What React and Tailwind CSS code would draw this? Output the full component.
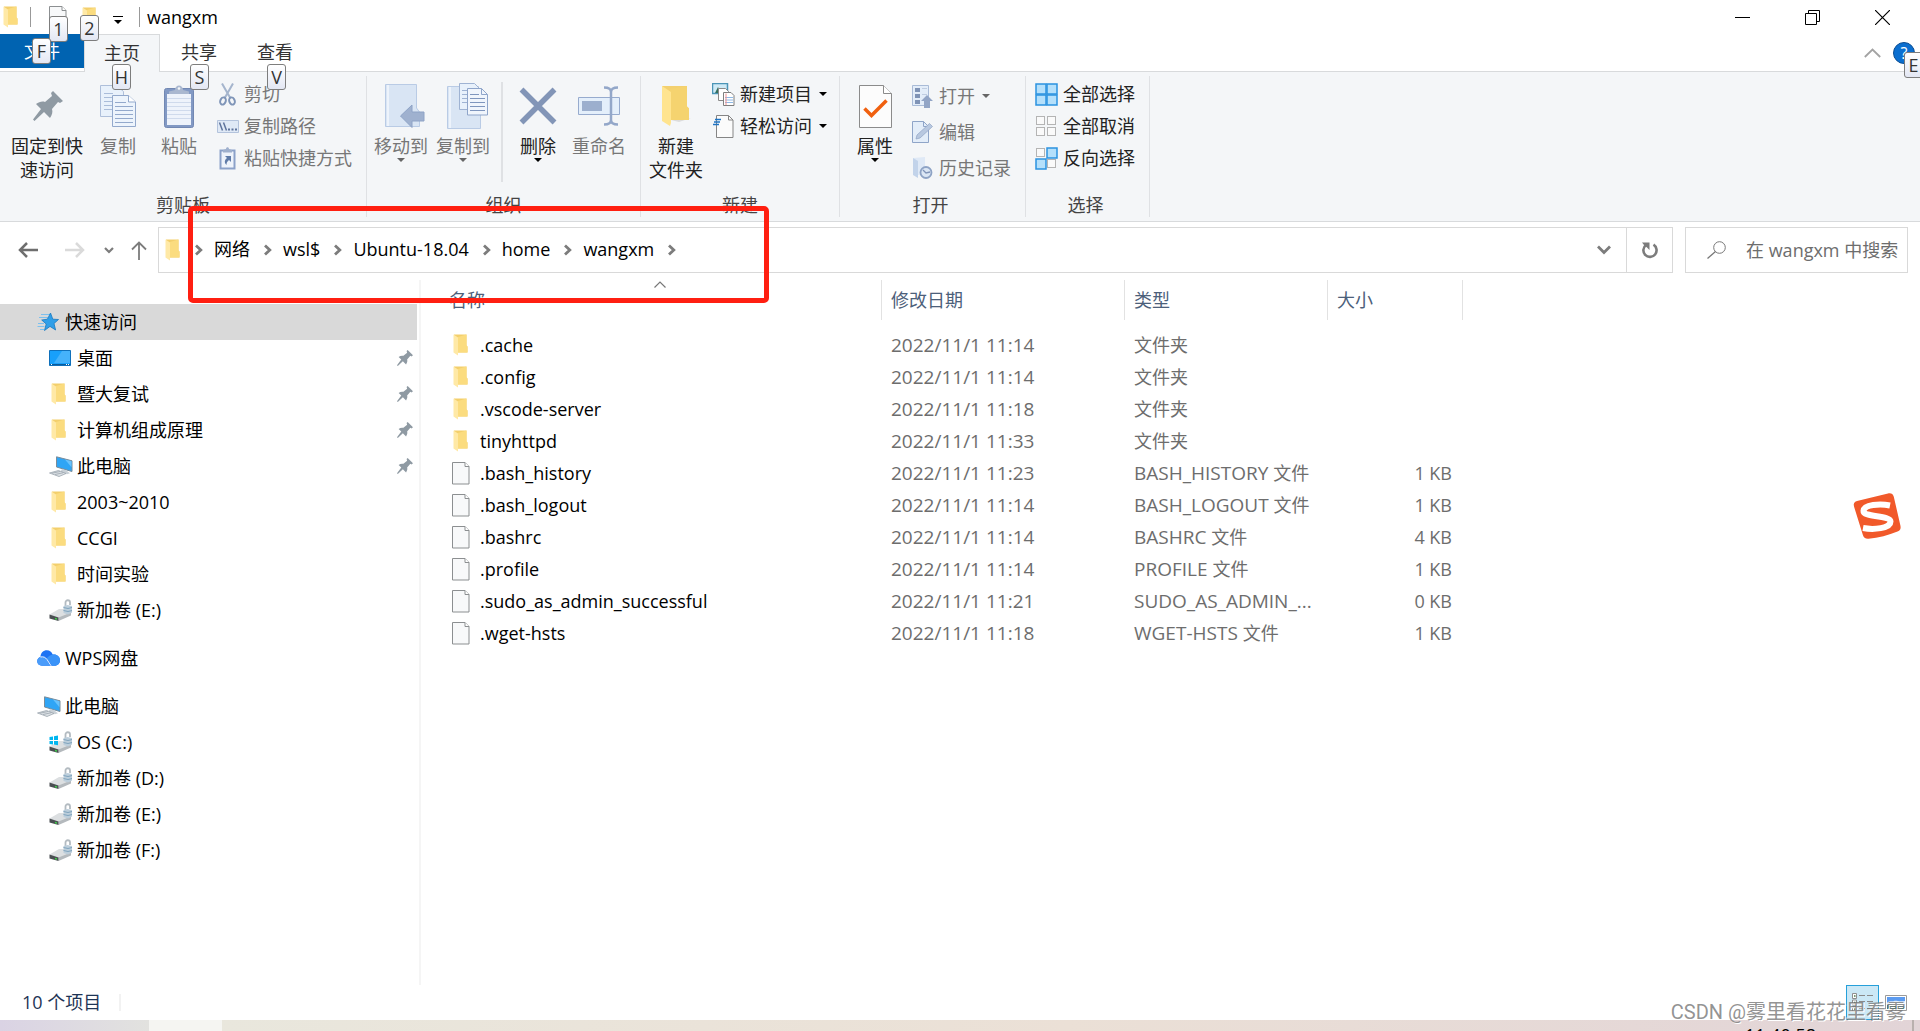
import React from 'react';

/* ---------- icons ---------- */

const Folder = ({ className = "w-[15px] h-[22px]" }) => (
    <svg viewBox="0 0 15 22" className={className} aria-hidden="true">
        <path d="M1 0.5h12.5v11l1 1v6H5L1 18z" fill="#f3cf6c" />
        <path d="M5 3l8.5-2.5v11l1 1v6H5z" fill="#fbdc7f" />
        <path d="M0.5 0.5L5 3.5v18L0.500 18.500z" fill="#ffe9a6" />
    </svg>
);

const Page = ({ className = "w-[18px] h-[23px]" }) => (
    <svg viewBox="0 0 18 23" className={className} aria-hidden="true">
        <path d="M0.500 0.500h12.500l4 4v17.500h-16.500z" fill="#f8f9fa" stroke="#8c8f91" />
        <path d="M13 0.500v4h4" fill="#fff" stroke="#8c8f91" />
    </svg>
);

const Pin = ({ className = "w-4 h-4" }) => (
    <svg viewBox="0 0 30 30" className={className} aria-hidden="true">
        <path d="M20 0l10 10-3 2-2-1-6 7c1 3 0 6-2 9l-6-6L1.500 30 0 28.500 8 18 3 13c3-2 6-3 9-2l7-6-1-3z" fill="#8f9aa3" />
    </svg>
);

const Star = () => (
    <svg viewBox="0 0 22 20" className="w-[22px] h-5" aria-hidden="true">
        <path d="M4 2.500h9M2 5.500h9M1 11.500h6M0.500 14.500h7M3 17.500h4" stroke="#7cc0ee" strokeWidth="1" />
        <path d="M13.500 1l2.300 6.200 5.700.3-4.500 4 1.600 6.500-5.600-3.600L7.500 18.500l1.700-6.500-4.500-4 5.700-.8z" fill="#2f9fe8" stroke="#1879c0" strokeWidth="0.8" />
    </svg>
);

const Desktop = () => (
    <svg viewBox="0 0 22 16" className="w-[22px] h-4" aria-hidden="true">
        <path d="M0.500 0.500h21v15h-21z" fill="#18a0fb" stroke="#0f70bb" />
        <path d="M13 1h8v12H5z" fill="#45b2fb" />
        <path d="M1 14.500h20" stroke="#0b5a99" />
        <path d="M2 14.500h1M17 14.500h1M19 14.500h1" stroke="#fff" />
    </svg>
);

const Computer = () => (
    <svg viewBox="0 0 24 21" className="w-6 h-[21px]" aria-hidden="true">
        <path d="M7.500 0.800l15.500 4v10.700L7.500 11z" fill="#2fa5f5" stroke="#7b8c99" />
        <path d="M16 3.500l6.500 1.800v6z" fill="#69c2fb" />
        <path d="M13 13l4 1.200 4 3-3 1-7-2z" fill="#c9d0d6" />
        <path d="M0.500 17l9-2.500 7.500 3-7 3z" fill="#dde2e6" stroke="#9aa5ad" strokeWidth="0.8" />
        <path d="M3 17.200l8-1.700M6 18.500l8-1.700" stroke="#9aa5ad" strokeWidth="0.8" />
    </svg>
);

const Cloud = () => (
    <svg viewBox="0 0 23 16" className="w-[23px] h-4" aria-hidden="true">
        <path d="M3.500 7C3.500 3 6.500 0.300 9.800 0.300c3 0 5 1.700 5.900 4.200 4-.7 7.300 2 7.300 5.700 0 3-2.300 5.500-5.500 5.500H5C2.200 15.700 0.200 13.800 0.200 11.300 0.200 9 1.600 7.500 3.500 7z" fill="#1d72f3" />
        <path d="M9.500 8.500c2-2.500 4-3.600 6.200-4 4-.7 7.300 2 7.300 5.700 0 3-2.300 5.500-5.500 5.500h-2.500z" fill="#3a93f8" />
        <path d="M3.500 7c2.600-.5 4.500.3 6 2.300l3.800 6.400H5C2.200 15.700.2 13.800.2 11.300.2 9 1.600 7.500 3.500 7z" fill="#4a9cfa" />
        <path d="M3.500 7c3-.6 5 .3 6.500 2.500l4 6.200" fill="none" stroke="#fff" strokeWidth="0.900" />
    </svg>
);

const Drive = ({ system }) => (
    <svg viewBox="0 0 24 23" className="w-6 h-[23px]" aria-hidden="true">
        <path d="M0.500 15.500L10 10h12v5L9.500 19.500z" fill="#dcdfe1" />
        <path d="M9.500 18.500L22 13.500v3L9.500 22z" fill="#b4b9bd" />
        <path d="M0.500 15.500l9 3V22l-9-2.500z" fill="#4a4f52" />
        <path d="M6 19.500l2 .6" stroke="#3fd44b" strokeWidth="1.500" />
        <path d="M16.500 7V3.500c0-3 4.500-3 4.500 0V6" fill="none" stroke="#b3bbc1" strokeWidth="1.800" />
        <path d="M14.500 7l4-1 4.500 1v6.500l-4 2-4.500-1.500z" fill="#bccedb" />
        <path d="M14.500 8.500l4.500 1 4-1M14.500 11.500l4.500 1 4-1" fill="none" stroke="#7fa3bd" />
        {system && <path d="M0.500 6l3.500-.6v3.600H0.500zM5 5.200l4-.6V9H5zM0.500 10H4v3.500l-3.500-.5zM5 10h4v4.200l-4-.6z" fill="#00b6f0" />}
    </svg>
);

const Caret = ({ className = "text-black" }) => (
    <svg viewBox="0 0 8 4" className={`w-2 h-1 ${className}`} aria-hidden="true">
        <path d="M0 0h8L4 4z" fill="currentColor" />
    </svg>
);

const Chevron = () => (
    <svg viewBox="0 0 8 12" className="w-2 h-3 shrink-0" aria-hidden="true">
        <path d="M1 1.500L5.800 6 1 10.500" fill="none" stroke="#7c7c7c" strokeWidth="2.800" />
    </svg>
);

const CopyIcon = () => (
    <svg viewBox="0 0 36 42" className="w-9 h-[42px]" aria-hidden="true">
        <path d="M0.500 0.500h16l7 6v25h-23z" fill="#e8f1fb" stroke="#aebfda" />
        <path d="M4 8.500h9M4 12.500h8M4 16.500h8M4 20.500h8M4 24.500h8" stroke="#a9bcd9" />
        <path d="M12.500 10.500h16l7 6.500v24.500h-23z" fill="#edf4fc" stroke="#93a9cc" />
        <path d="M28.500 10.500V17h7" fill="#fff" stroke="#93a9cc" />
        <path d="M15 17.500h11M15 21.500h18M15 25.500h18M15 29.500h18M15 33.500h18M15 37.500h18" stroke="#93a9cc" />
    </svg>
);

const PasteIcon = () => (
    <svg viewBox="0 0 30 43" className="w-[30px] h-[43px]" aria-hidden="true">
        <rect x="0.500" y="3.500" width="29" height="39" rx="2" fill="#8299c4" stroke="#7288b3" />
        <path d="M3 9h24v31H3z" fill="#eef3fb" />
        <path d="M3 13.500h24M3 17.500h24M3 21.500h24M3 25.500h24M3 29.500h24M3 33.500h24" stroke="#cfdaec" />
        <path d="M5 9V6.500l6-1.500c0-6 8-6 8 0l6 1.500V9z" fill="#aab8d0" />
        <circle cx="15" cy="3.500" r="1.300" fill="#f4f6f8" />
    </svg>
);

const ScissorsIcon = () => (
    <svg viewBox="0 0 17 23" className="w-[17px] h-[23px]" aria-hidden="true">
        <path d="M3 0.500l8 14M14 0.500l-8 14" stroke="#a5b5cd" strokeWidth="2" />
        <ellipse cx="4" cy="18" rx="2.700" ry="3.700" fill="none" stroke="#7f95b8" strokeWidth="2" transform="rotate(20 4 18)" />
        <ellipse cx="13" cy="18" rx="2.700" ry="3.700" fill="none" stroke="#7f95b8" strokeWidth="2" transform="rotate(-20 13 18)" />
    </svg>
);

const PathIcon = () => (
    <svg viewBox="0 0 22 13" className="w-[22px] h-[13px]" aria-hidden="true">
        <path d="M0.500 0.500h21v12h-21z" fill="#dfe9f6" stroke="#b3c3dc" />
        <path d="M2.500 2.500l3 8M6.500 2.500l3 8" stroke="#5e749c" strokeWidth="1.500" />
        <path d="M11 9.500h2M14.500 9.500h2M18 9.500h2" stroke="#5e749c" strokeWidth="2" />
    </svg>
);

const ShortcutIcon = () => (
    <svg viewBox="0 0 17 23" className="w-[17px] h-[23px]" aria-hidden="true">
        <path d="M1.500 3.500h14v18h-14z" fill="#eef3fb" stroke="#8ba1c9" strokeWidth="2" />
        <path d="M4 5.500V3l3-1c0-2.500 3-2.500 3 0l3 1v2.500z" fill="#9fb0cd" />
        <path d="M6 9h6v6l-2-2c-2 1.500-2.500 3-2.500 5C5 15.500 5.500 13 8 11z" fill="#5f7ba8" />
    </svg>
);

const MoveToIcon = () => (
    <svg viewBox="0 0 40 44" className="w-10 h-11" aria-hidden="true">
        <path d="M0.500 0.500h31V24l3 4v14.500h-34z" fill="#d9e5f4" stroke="#b9cbe5" />
        <path d="M3 1v41" stroke="#edf3fb" strokeWidth="2" />
        <path d="M15.500 32L27 21v7h12v9H27v6.500z" fill="#9fb1cf" stroke="#8ea3c6" />
    </svg>
);

const CopyToIcon = () => (
    <svg viewBox="0 0 41 46" className="w-[41px] h-[46px]" aria-hidden="true">
        <path d="M0.500 3.500h31V27l2 4v14.500h-33z" fill="#d9e5f4" stroke="#b9cbe5" />
        <path d="M3 4v41" stroke="#edf3fb" strokeWidth="2" />
        <path d="M12.500 0.500h15l5 5v21h-20z" fill="#e8f1fb" stroke="#9fb3d3" />
        <path d="M15 7.500h5M15 11.500h5M15 15.500h5M15 19.500h5" stroke="#9fb3d3" />
        <path d="M20.500 5.500h14l6 6v20.500h-20z" fill="#f0f5fc" stroke="#8fa5ca" />
        <path d="M34.500 5.500v6h6" fill="none" stroke="#8fa5ca" />
        <path d="M23 11.500h9M23 15.500h15M23 19.500h15M23 23.500h15M23 27.500h15" stroke="#7f96be" />
    </svg>
);

const DeleteIcon = () => (
    <svg viewBox="0 0 38 38" className="w-[38px] h-[38px]" aria-hidden="true">
        <path d="M2.500 2.500l33 33M35.500 2.500l-33 33" stroke="#8295b7" strokeWidth="5.500" />
    </svg>
);

const RenameIcon = () => (
    <svg viewBox="0 0 42 40" className="w-[42px] h-10" aria-hidden="true">
        <path d="M0.500 11.500h41v17h-41z" fill="#e4effb" stroke="#97abce" />
        <path d="M4 15h20v10H4z" fill="#9cafce" />
        <path d="M33 5v30M26 1.500c4 0 7 1 7 4.500 0-3.500 3-4.500 7-4.500M26 38.500c4 0 7-1 7-4.500 0 3.500 3 4.500 7 4.500" fill="none" stroke="#93a7c9" strokeWidth="2.500" />
    </svg>
);

const NewFolderIcon = () => (
    <svg viewBox="0 0 30 42" className="w-[30px] h-[42px]" aria-hidden="true">
        <path d="M10 35l20-2-12 4z" fill="#dcdcdc" />
        <path d="M1 1h25v20.500l2 2V35H9z" fill="#f3d06f" />
        <path d="M9 4l17-3v20.500l2 2V35H9z" fill="#f5d36f" />
        <path d="M1 1l9 6v31l-1 3-8-5z" fill="#ffe48f" />
    </svg>
);

const NewItemIcon = () => (
    <svg viewBox="0 0 23 23" className="w-[23px] h-[23px]" aria-hidden="true">
        <path d="M0.500 0.500h15v10h-15z" fill="#cfeaf6" stroke="#4b95b7" strokeWidth="1.500" />
        <path d="M3 10l3-6 3 6z" fill="#35705f" />
        <path d="M6.500 5.500h7l3 3v9h-10z" fill="#fff" stroke="#8a8a8a" />
        <path d="M11.500 9.500h7.500l3 3v10H11.500z" fill="#fff" stroke="#7f7f7f" />
        <path d="M13 14.500h8M13 17h8M13 19.500h8" stroke="#8fb9e6" />
        <path d="M14 10.500V22" stroke="#ef8f8f" />
    </svg>
);

const EasyAccessIcon = () => (
    <svg viewBox="0 0 21 23" className="w-[21px] h-[23px]" aria-hidden="true">
        <path d="M3.500 0.500h12l4.500 4.500v17.500H3.500z" fill="#fbfbfb" stroke="#858585" />
        <path d="M15.500 0.500V5H20" fill="none" stroke="#858585" />
        <path d="M2 4.500h6M1 7h6M0 9.500h6" stroke="#1f74c4" strokeWidth="1.500" />
    </svg>
);

const PropertiesIcon = () => (
    <svg viewBox="0 0 33 43" className="w-[33px] h-[43px]" aria-hidden="true">
        <path d="M0.500 0.500h24l8 8v34h-32z" fill="#fcfcfc" stroke="#8b8b8b" />
        <path d="M24.500 0.500v8h8" fill="#fff" stroke="#8b8b8b" />
        <path d="M5.500 23.500l7 7L27.500 15.500" fill="none" stroke="#f0600f" strokeWidth="3.500" />
    </svg>
);

const OpenIcon = () => (
    <svg viewBox="0 0 21 23" className="w-[21px] h-[23px]" aria-hidden="true">
        <path d="M0.500 0.500h16v20h-16z" fill="#e3edf9" stroke="#a9bbd7" />
        <path d="M3 3h5v4H3zM3 9h5v4H3zM3 15h5v4H3z" fill="#7f93b6" />
        <path d="M10 3.500h5M10 9.500h5" stroke="#c0cde1" />
        <path d="M15 10l6 6h-3v7h-6v-7H9z" fill="#92a5c6" />
    </svg>
);

const EditIcon = () => (
    <svg viewBox="0 0 21 22" className="w-[21px] h-[22px]" aria-hidden="true">
        <path d="M0.500 0.500h11l5 5v16h-16z" fill="#e3edf9" stroke="#8fa5c8" />
        <path d="M11.500 0.500v5h5" fill="none" stroke="#8fa5c8" />
        <path d="M4 18l1-4L17.500 2.500l3 3L8 17z" fill="#b8c8e0" stroke="#8fa3c4" strokeWidth="0.700" />
    </svg>
);

const HistoryIcon = () => (
    <svg viewBox="0 0 21 22" className="w-[21px] h-[22px]" aria-hidden="true">
        <path d="M1 1l12-1v9l2 2v7H5z" fill="#dfe9f6" />
        <path d="M1 1l5 3v17l-5-3z" fill="#c2d3ea" />
        <circle cx="14" cy="15.500" r="5.500" fill="#dbe6f4" stroke="#8ea3c5" strokeWidth="1.800" />
        <path d="M11 13l3 3 4-1" fill="none" stroke="#8094b8" strokeWidth="1.300" />
    </svg>
);

const SelectIcon = ({ on }) => (
    <svg viewBox="0 0 23 23" className="w-[23px] h-[23px]" aria-hidden="true">
        {[[0, 0], [11, 0], [0, 11], [11, 11]].map(([x, y], i) => (
            on[i]
                ? <rect key={i} x={x + 1} y={y + 1} width="10" height="10" fill="#b5e0fb" stroke="#2b93e0" strokeWidth="1.500" />
                : <rect key={i} x={x + 1.5} y={y + 1.5} width="8" height="8" fill="#fafafa" stroke="#b4b4b4" />
        ))}
    </svg>
);

/* ---------- shared parts ---------- */

const KeyTip = ({ children, className }) => (
    <kbd className={`absolute z-10 w-[19px] h-[26px] flex items-center justify-center rounded-[3px] border border-[#7d7d7d] bg-linear-to-b from-white to-[#e3e7f3] font-[inherit] text-lg leading-6 text-[#333] ${className}`}>
        {children}
    </kbd>
);

const Group = ({ label, className = "", children }) => (
    <section className={`flex flex-col justify-between my-1 border-r border-[#dfe1e4] ${className}`}>
        <div className="flex items-start pt-0.5">{children}</div>
        <h2 className="text-center leading-6 text-[#444]">{label}</h2>
    </section>
);

const BigButton = ({ icon, label, disabled, caret, className = "w-[62px]" }) => (
    <button disabled={disabled} className={`flex flex-col items-center shrink-0 leading-6 ${disabled ? 'text-[#777]' : 'text-[#222]'} ${className}`}>
        <span className="h-14 flex items-center justify-center">{icon}</span>
        <span className="whitespace-pre">{label}</span>
        {caret && <Caret className={disabled ? 'text-[#666]' : 'text-black'} />}
    </button>
);

const SmallButton = ({ icon, label, disabled, caret, className = "h-8" }) => (
    <button disabled={disabled} className={`flex items-center gap-[5px] whitespace-nowrap ${disabled ? 'text-[#777]' : 'text-[#222]'} ${className}`}>
        <span className="w-[23px] flex justify-center">{icon}</span>
        {label}
        {caret && <Caret className={disabled ? 'ml-0.5 text-[#666]' : 'ml-0.5 text-black'} />}
    </button>
);

/* ---------- data ---------- */

const crumbs = ["网络", "wsl$", "Ubuntu-18.04", "home", "wangxm"];

const quickAccess = [
    { name: "桌面", icon: <Desktop />, pinned: true },
    { name: "暨大复试", icon: <Folder />, pinned: true },
    { name: "计算机组成原理", icon: <Folder />, pinned: true },
    { name: "此电脑", icon: <Computer />, pinned: true },
    { name: "2003~2010", icon: <Folder /> },
    { name: "CCGI", icon: <Folder /> },
    { name: "时间实验", icon: <Folder /> },
    { name: "新加卷 (E:)", icon: <Drive /> },
];

const drives = [
    { name: "OS (C:)", icon: <Drive system /> },
    { name: "新加卷 (D:)", icon: <Drive /> },
    { name: "新加卷 (E:)", icon: <Drive /> },
    { name: "新加卷 (F:)", icon: <Drive /> },
];

const files = [
    { name: ".cache", date: "2022/11/1 11:14", type: "文件夹", folder: true },
    { name: ".config", date: "2022/11/1 11:14", type: "文件夹", folder: true },
    { name: ".vscode-server", date: "2022/11/1 11:18", type: "文件夹", folder: true },
    { name: "tinyhttpd", date: "2022/11/1 11:33", type: "文件夹", folder: true },
    { name: ".bash_history", date: "2022/11/1 11:23", ext: "BASH_HISTORY ", type: "文件", size: "1 KB" },
    { name: ".bash_logout", date: "2022/11/1 11:14", ext: "BASH_LOGOUT ", type: "文件", size: "1 KB" },
    { name: ".bashrc", date: "2022/11/1 11:14", ext: "BASHRC ", type: "文件", size: "4 KB" },
    { name: ".profile", date: "2022/11/1 11:14", ext: "PROFILE ", type: "文件", size: "1 KB" },
    { name: ".sudo_as_admin_successful", date: "2022/11/1 11:21", ext: "SUDO_AS_ADMIN_...", size: "0 KB" },
    { name: ".wget-hsts", date: "2022/11/1 11:18", ext: "WGET-HSTS ", type: "文件", size: "1 KB" },
];

/* ---------- sections ---------- */

const TitleBar = () => (
    <header className="flex items-center h-[34px] pl-[3px] pr-[3px]">
        <Folder />
        <span className="ml-3 w-px h-5 bg-[#999]" />
        <button aria-label="属性" className="relative ml-[18px] w-[17px] h-[22px]">
            <Page />
            <KeyTip className="left-0 top-2.5">1</KeyTip>
        </button>
        <button aria-label="新建文件夹" className="relative ml-4 w-[15px] h-5">
            <Folder />
            <KeyTip className="-left-0.5 top-2">2</KeyTip>
        </button>
        <button aria-label="自定义快速访问工具栏" className="ml-4 mt-1.5 flex flex-col items-center gap-[3px]">
            <span className="w-2.5 h-px bg-black" />
            <Caret />
        </button>
        <span className="ml-4 w-px h-5 bg-[#999]" />
        <h1 className="ml-[7px] text-black leading-6">wangxm</h1>
        <div className="ml-auto flex h-full text-black">
            <button aria-label="最小化" className="w-[70px] flex items-center justify-center">
                <svg viewBox="0 0 15 15" className="w-[15px] h-[15px]"><path d="M0 7.500h15" stroke="currentColor" /></svg>
            </button>
            <button aria-label="还原" className="w-[70px] flex items-center justify-center">
                <svg viewBox="0 0 15 15" className="w-[15px] h-[15px]"><path d="M0.500 3.500h11v11h-11zM3.500 3.500v-3h11v11h-3" fill="none" stroke="currentColor" /></svg>
            </button>
            <button aria-label="关闭" className="w-[70px] flex items-center justify-center">
                <svg viewBox="0 0 15 15" className="w-[15px] h-[15px]"><path d="M0 0l15 15M15 0L0 15" stroke="currentColor" strokeWidth="1.200" /></svg>
            </button>
        </div>
    </header>
);

const Tabs = () => (
    <nav className="flex h-[37px] text-[#333]">
        <button className="relative w-[84px] h-[34px] bg-[#0063b1] text-white">
            文件
            <KeyTip className="left-8 top-1">F</KeyTip>
        </button>
        <button className="relative w-[76px] h-[38px] pb-0.5 bg-[#f4f6f8] border border-b-0 border-[#d8dadc]">
            主页
            <KeyTip className="left-[27px] top-[29px]">H</KeyTip>
        </button>
        <button className="relative w-[76px] pb-0.5 pl-0.5">
            共享
            <KeyTip className="left-[30px] top-[30px]">S</KeyTip>
        </button>
        <button className="relative w-[76px] pb-0.5 pl-0.5">
            查看
            <KeyTip className="left-[31px] top-[30px]">V</KeyTip>
        </button>
        <div className="ml-auto flex items-center gap-3 pr-[5px]">
            <button aria-label="最小化功能区">
                <svg viewBox="0 0 17 10" className="w-[17px] h-2.5"><path d="M0.800 9l7.700-7.500L16.200 9" fill="none" stroke="#a3a3a3" strokeWidth="1.800" /></svg>
            </button>
            <div className="relative">
                <button aria-label="帮助" className="w-[22px] h-[22px] flex items-center justify-center rounded-full border border-[#0b4d92] bg-[#0b6fd0] text-white text-base leading-none">?</button>
                <div className="absolute left-[11px] top-2.5 w-4 h-[26px] overflow-hidden">
                    <KeyTip className="left-0 top-0">E</KeyTip>
                </div>
            </div>
        </div>
    </nav>
);

const Ribbon = () => (
    <div className="flex h-[151px] bg-[#f4f6f8] border-y border-[#d8dadc]">
        <Group label="剪贴板" className="w-[367px]">
            <BigButton className="w-[94px]" icon={<span className="pl-0.5"><Pin className="w-[30px] h-[30px]" /></span>} label={"固定到快\n速访问"} />
            <BigButton className="w-12" disabled icon={<CopyIcon />} label="复制" />
            <BigButton className="w-[74px]" disabled icon={<PasteIcon />} label="粘贴" />
            <div>
                <SmallButton disabled icon={<ScissorsIcon />} label="剪切" />
                <SmallButton disabled icon={<PathIcon />} label="复制路径" />
                <SmallButton disabled icon={<ShortcutIcon />} label="粘贴快捷方式" />
            </div>
        </Group>
        <Group label="组织" className="w-[274px]">
            <BigButton className="w-[68px]" disabled caret icon={<span className="pl-2"><MoveToIcon /></span>} label="移动到" />
            <BigButton className="w-14" disabled caret icon={<span className="pl-2"><CopyToIcon /></span>} label="复制到" />
            <span className="mt-1 ml-2.5 mr-1 w-0.5 h-[100px] bg-[#dfe1e4]" />
            <BigButton caret icon={<DeleteIcon />} label="删除" />
            <BigButton className="w-[60px]" disabled icon={<RenameIcon />} label="重命名" />
        </Group>
        <Group label="新建" className="w-[199px]">
            <BigButton className="w-[70px]" icon={<NewFolderIcon />} label={"新建\n文件夹"} />
            <div className="pl-px">
                <SmallButton caret icon={<NewItemIcon />} label="新建项目" />
                <SmallButton caret icon={<EasyAccessIcon />} label="轻松访问" />
            </div>
        </Group>
        <Group label="打开" className="w-[186px] pr-1">
            <BigButton className="w-[70px]" caret icon={<PropertiesIcon />} label="属性" />
            <div className="pl-px">
                <SmallButton className="h-9" disabled caret icon={<OpenIcon />} label="打开" />
                <SmallButton className="h-9" disabled icon={<EditIcon />} label="编辑" />
                <SmallButton className="h-9" disabled icon={<HistoryIcon />} label="历史记录" />
            </div>
        </Group>
        <Group label="选择" className="w-[124px] pr-1">
            <div className="pl-[9px]">
                <SmallButton icon={<SelectIcon on={[1, 1, 1, 1]} />} label="全部选择" />
                <SmallButton icon={<SelectIcon on={[0, 0, 0, 0]} />} label="全部取消" />
                <SmallButton icon={<SelectIcon on={[0, 1, 1, 0]} />} label="反向选择" />
            </div>
        </Group>
    </div>
);

const AddressBar = () => (
    <div className="relative flex items-center pt-[5px] h-[51px] pl-[18px] pr-3">
        <button aria-label="后退">
            <svg viewBox="0 0 20 16" className="w-5 h-4"><path d="M9 1L2 8l7 7M2 8h18" fill="none" stroke="#6e6e6e" strokeWidth="2.500" /></svg>
        </button>
        <button aria-label="前进" className="ml-[27px]">
            <svg viewBox="0 0 20 16" className="w-5 h-4"><path d="M11 1l7 7-7 7M18 8H0" fill="none" stroke="#dadada" strokeWidth="2.500" /></svg>
        </button>
        <button aria-label="最近位置" className="ml-[19px]">
            <svg viewBox="0 0 10 7" className="w-2.5 h-[7px]"><path d="M1 1l4 4 4-4" fill="none" stroke="#7c7c7c" strokeWidth="2.200" /></svg>
        </button>
        <button aria-label="上移" className="ml-[17px]">
            <svg viewBox="0 0 16 19" className="w-4 h-[19px]"><path d="M1 8.500L8 1.500l7 7M8 1.500V19" fill="none" stroke="#7c7c7c" strokeWidth="1.800" /></svg>
        </button>

        <div className="ml-[11px] flex flex-1 items-center h-[46px] border border-[#d9d9d9]">
            <span className="ml-1.5"><Folder /></span>
            <span className="ml-[15px]"><Chevron /></span>
            {crumbs.map(crumb => (
                <React.Fragment key={crumb}>
                    <button className="ml-[11px] mr-3.5 pb-0.5 text-black">{crumb}</button>
                    <Chevron />
                </React.Fragment>
            ))}
            <button aria-label="历史地址" className="ml-auto w-[45px] h-full flex items-center justify-center border-r border-[#d9d9d9]">
                <svg viewBox="0 0 14 10" className="w-3.5 h-2.5"><path d="M1 1.500l6 6 6-6" fill="none" stroke="#7c7c7c" strokeWidth="2.800" /></svg>
            </button>
            <button aria-label="刷新" className="w-[45px] h-full flex items-center justify-center">
                <svg viewBox="0 0 16 17" className="w-4 h-[17px]">
                    <path d="M11.500 2.700A6.600 6.600 0 1 1 4 3" fill="none" stroke="#7c7c7c" strokeWidth="2.600" />
                    <path d="M0 0.500h7.500V8L5 5.500 2 3z" fill="#7c7c7c" />
                </svg>
            </button>
        </div>

        <label className="ml-3 flex items-center w-[223px] h-[46px] border border-[#d9d9d9] pl-[21px]">
            <svg viewBox="0 0 19 18" className="w-[19px] h-[18px] shrink-0" aria-hidden="true">
                <circle cx="12.500" cy="6.500" r="5.800" fill="none" stroke="#777" />
                <path d="M8.500 10.500L0.500 17.500" stroke="#777" strokeWidth="1.300" />
            </svg>
            <input type="text" aria-label="搜索" placeholder="在 wangxm 中搜索" className="ml-5 w-full min-w-0 outline-none bg-transparent placeholder:text-[#6d6d6d]" />
        </label>

        {/* highlight around the share path */}
        <div className="absolute z-20 left-[188px] -top-4 w-[581px] h-[97px] border-5 border-[#ff1f11] rounded-[5px] pointer-events-none" />
    </div>
);

const NavItem = ({ item, root, active }) => (
    <li>
        <a href="#" className={`flex items-center h-9 text-black mr-0.5 ${root ? 'pl-[37px]' : 'pl-[49px]'} ${active ? 'bg-[#d9d9d9]' : ''}`}>
            <span className="flex w-7 shrink-0">
                <span className={item.icon.type === Folder ? 'pl-0.5' : ''}>{item.icon}</span>
            </span>
            {item.name}
            {item.pinned && <span className="ml-auto mr-1"><Pin /></span>}
        </a>
    </li>
);

const Sidebar = () => (
    <nav className="w-[421px] shrink-0 pt-6 border-r-2 border-[#f5f5f5]">
        <ul>
            <NavItem root active item={{ name: "快速访问", icon: <Star /> }} />
            {quickAccess.map(item => <NavItem key={item.name} item={item} />)}
        </ul>
        <ul className="my-3">
            <NavItem root item={{ name: "WPS网盘", icon: <Cloud /> }} />
        </ul>
        <ul>
            <NavItem root item={{ name: "此电脑", icon: <Computer /> }} />
            {drives.map(item => <NavItem key={item.name} item={item} />)}
        </ul>
    </nav>
);

const Heading = ({ children }) => (
    <th scope="col" className="p-0 pb-[9px] font-normal text-left">
        <div className="relative h-10 flex items-center pl-[9px] border-r border-[#e2e2e2] text-[#4c607a]">{children}</div>
    </th>
);

const FileTable = () => (
    <main className="flex-1 min-w-0 pl-[19px]">
        <table className="table-fixed w-[1023px] border-collapse">
            <colgroup>
                <col className="w-[442px]" />
                <col className="w-[243px]" />
                <col className="w-[203px]" />
                <col className="w-[135px]" />
            </colgroup>
            <thead>
                <tr>
                    <Heading>
                        名称
                        <svg viewBox="0 0 12 7" className="absolute left-[214px] top-px w-3 h-[7px]" aria-hidden="true">
                            <path d="M0.500 6.500L6 1l5.500 5.500" fill="none" stroke="#777" strokeWidth="1.200" />
                        </svg>
                    </Heading>
                    <Heading>修改日期</Heading>
                    <Heading>类型</Heading>
                    <Heading>大小</Heading>
                </tr>
            </thead>
            <tbody className="text-[#6d6d6d]">
                {files.map(file => (
                    <tr key={file.name} className="h-8">
                        <td className="p-0 text-black">
                            <div className="flex items-center pl-3">
                                <span className="w-7">{file.folder ? <span className="block pl-px"><Folder /></span> : <Page />}</span>
                                {file.name}
                            </div>
                        </td>
                        <td className="p-0 pl-[9px] text-[19px]">{file.date}</td>
                        <td className="p-0 pl-[9px] whitespace-nowrap">
                            {file.ext && <span className="text-[19px]">{file.ext}</span>}
                            {file.type}
                        </td>
                        <td className="p-0 pr-[11px] text-right">{file.size}</td>
                    </tr>
                ))}
            </tbody>
        </table>
    </main>
);

const StatusBar = () => (
    <footer className="relative flex items-center h-[35px] pl-[22px] pr-[13px] text-[#1e3455]">
        <span className="pb-0.5">10 个项目</span>
        <span className="ml-[18px] w-0.5 h-[17px] bg-[#f2f2f2]" />
        <div className="ml-auto flex items-center h-full gap-1.5">
            <button aria-label="详细信息" className="w-[33px] h-full flex items-center justify-center border border-[#26a0da] bg-[#cbe8f6]">
                <svg viewBox="0 0 21 20" className="w-[21px] h-5">
                    <path d="M0.500 0.500h4v5h-4zM0.500 7h4v5h-4zM0.500 13.500h4v5h-4z" fill="#fff" stroke="#8f8f8f" />
                    <path d="M2 3h1.500M2 9.500h1.500M2 16h1.500" stroke="#4c7a4c" strokeWidth="1.500" />
                    <path d="M7 2.500h6M15 2.500h6M7 8.500h6M15 8.500h6M7 15.500h6M15 15.500h6" stroke="#8a8a8a" />
                </svg>
            </button>
            <button aria-label="大缩略图">
                <svg viewBox="0 0 22 16" className="w-[22px] h-4">
                    <path d="M0.500 0.500h21v15h-21z" fill="#fff" stroke="#9a9a9a" />
                    <path d="M2 2h18v12H2z" fill="#5c9bf0" />
                    <path d="M2 8c3-3 5-1 7-2s5 1 11 0v4H2z" fill="#e6f0fa" />
                    <path d="M2 10c5-2 9 3 18 1v3H2z" fill="#4a7a74" />
                </svg>
            </button>
        </div>
        <p className="absolute z-10 right-3.5 top-3 text-xl leading-[30px] whitespace-nowrap text-[#777]/80 [text-shadow:1px_1px_0_#fff] font-['Roboto','Noto_Sans_CJK_SC',sans-serif]">CSDN @雾里看花花里看雾</p>
    </footer>
);

const Taskbar = () => (
    <div className="flex h-[11px] overflow-hidden bg-[#e9e7df]">
        <div className="w-[149px] shrink-0 bg-linear-to-r from-[#dad3e4] to-[#e2e2df]" />
        <div className="w-[73px] shrink-0 bg-[#f5f5f2]" />
        <div className="flex-1 flex justify-end items-start bg-linear-to-r from-[#e9e7dd] via-[#ebe0d6] to-[#e2d4d7]">
            <time className="mt-[3px] mr-[96px] text-black leading-6">11:40:58</time>
            <span className="w-0.5 h-full mr-1.5 bg-[#b9b0ae]" />
        </div>
    </div>
);

const InputMethodBadge = () => (
    <button aria-label="输入法" className="fixed right-[18px] top-[492px]">
        <svg viewBox="0 0 50 48" className="w-[50px] h-12" aria-hidden="true">
            <path d="M5 9L36 1.500c3-.6 5 .4 5.800 3.300L48.500 34c.6 3-.5 4.600-3 5.500-9 3.500-19 6.500-29 7.300-3 .2-5-1-5.700-4L2 14.500C1.200 11.500 2.200 9.700 5 9z" fill="#f1592a" />
            <path d="M38 13.500c-10-2-26-1-26.500 5.500C11 25.500 38.500 23 38.500 29.500c0 7-17 8.500-27.500 6.500" fill="none" stroke="#fff" strokeWidth="6" />
        </svg>
    </button>
);

export default function App() {
    return (
        <div className="min-h-screen flex flex-col overflow-x-hidden bg-white text-lg leading-6 font-['Open_Sans','Noto_Sans_CJK_SC',sans-serif]">
            <TitleBar />
            <Tabs />
            <Ribbon />
            <AddressBar />
            <div className="flex flex-1 mt-[7px]">
                <Sidebar />
                <FileTable />
            </div>
            <StatusBar />
            <Taskbar />
            <InputMethodBadge />
        </div>
    );
}
